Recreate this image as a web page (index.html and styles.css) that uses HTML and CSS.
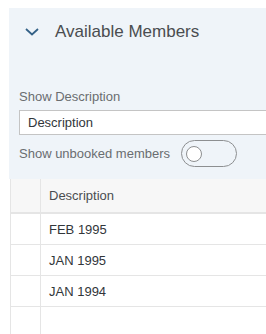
FILE: index.html
```html
<!DOCTYPE html>
<html lang="en">
  <head>
    <meta charset="UTF-8" />
    <meta name="viewport" content="width=device-width, initial-scale=1.0" />
    <title>Available Members</title>
    <link rel="stylesheet" href="styles.css">
  </head>
  <body>
    <div class="panel">
      <div class="panel-head">
        <svg class="chevron" width="14" height="8" viewBox="0 0 14 8">
          <path d="M1 1 L7 6.5 L13 1" fill="none" stroke="#346187" stroke-width="1.8" />
        </svg>
        <span class="title">Available Members</span>
      </div>

      <div class="panel-body">
        <div class="label">Show Description</div>
        <div class="select">Description</div>
        <div class="toggle-row">
          <span class="label">Show unbooked members</span>
          <span class="toggle"><span class="knob"></span></span>
        </div>
      </div>
    </div>

    <div class="table">
      <div class="row head">
        <div class="cell sel"></div>
        <div class="cell">Description</div>
      </div>
      <div class="row">
        <div class="cell sel"></div>
        <div class="cell">FEB 1995</div>
      </div>
      <div class="row">
        <div class="cell sel"></div>
        <div class="cell">JAN 1995</div>
      </div>
      <div class="row">
        <div class="cell sel"></div>
        <div class="cell">JAN 1994</div>
      </div>
      <div class="row empty">
        <div class="cell sel"></div>
        <div class="cell"></div>
      </div>
    </div>
  </body>
</html>
```

FILE: styles.css
```css
body {
  margin: 0;
  background-color: white;
  font-family: "Liberation Sans", Arial, sans-serif;
  overflow: hidden;
}

.panel {
  margin: 8px 0 0 9px;
  background-color: #eff4f9;
}

.panel-head {
  display: flex;
  align-items: center;
  gap: 16px;
  height: 24px;
  padding: 12px 0 0 16px;
}

.chevron {
  display: block;
}

.title {
  font-size: 17px;
  color: #4a4d50;
  line-height: 24px;
}

.panel-body {
  padding: 45px 0 12px 10px;
}

.label {
  font-size: 13px;
  line-height: 16px;
  color: #6a6d70;
}

.select {
  margin-top: 5px;
  height: 23px;
  line-height: 23px;
  padding-left: 8px;
  background-color: white;
  border: 1px solid #c4c4c4;
  border-right: none;
  font-size: 13px;
  color: #32363a;
}

.toggle-row {
  display: flex;
  align-items: center;
  gap: 11px;
  margin-top: 5px;
}

.toggle {
  display: flex;
  align-items: center;
  box-sizing: border-box;
  width: 56px;
  height: 27px;
  padding-left: 4px;
  border: 1px solid #8d8f91;
  border-radius: 14px;
  background-color: #eff4f9;
}

.knob {
  box-sizing: border-box;
  width: 16px;
  height: 16px;
  border: 1px solid #8d8f91;
  border-radius: 50%;
  background-color: white;
}

.table {
  margin-left: 10px;
  border-left: 1px solid #e5e5e5;
  font-size: 13px;
  color: #32363a;
}

.row {
  display: flex;
  height: 30px;
  border-bottom: 1px solid #e5e5e5;
}

.row.head {
  height: 33px;
  border-bottom: 2px solid #e5e5e5;
  background-color: #f7f7f7;
  color: #4a4d50;
}

.row.empty {
  height: 40px;
  border-bottom: none;
}

.cell {
  display: flex;
  align-items: center;
  padding-left: 8px;
  flex: 1;
}

.cell.sel {
  flex: none;
  width: 29px;
  padding: 0;
  border-right: 1px solid #e5e5e5;
}
```
